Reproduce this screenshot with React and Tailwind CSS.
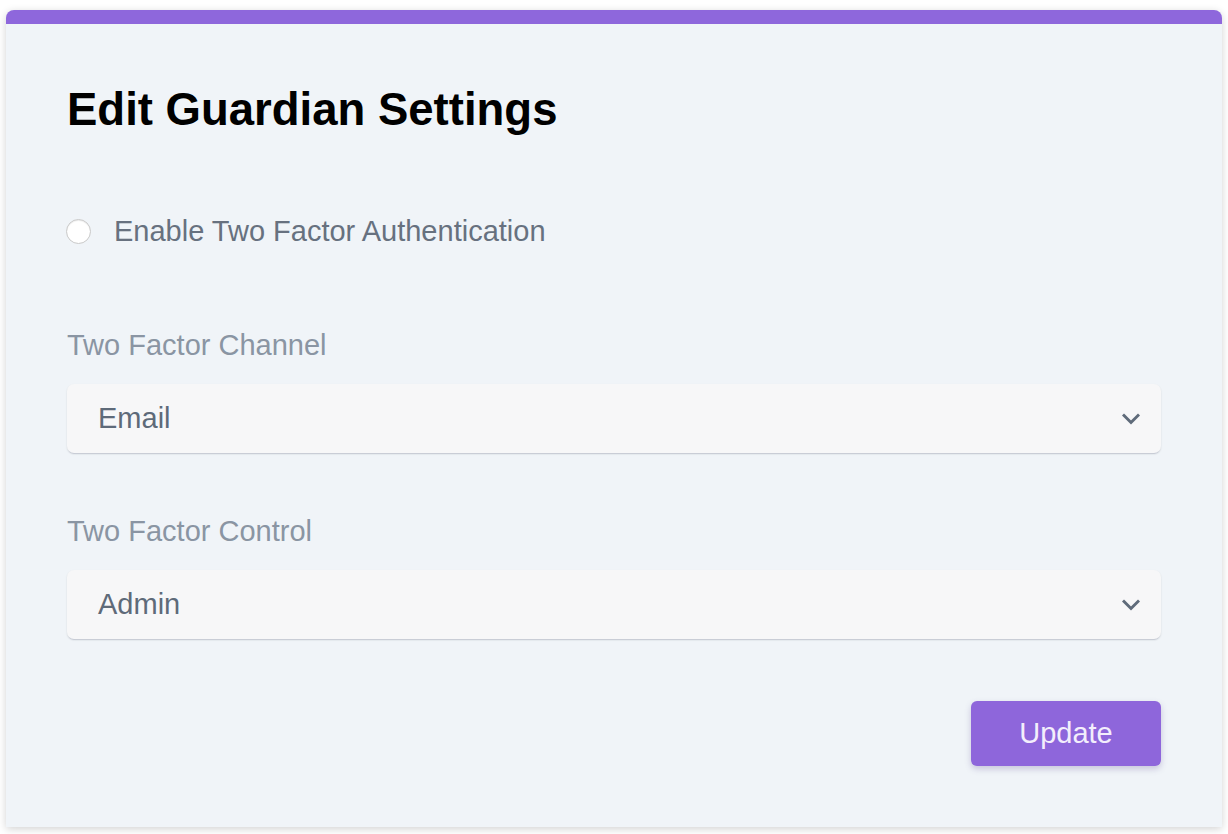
import React from "react";

function Chevron() {
  return (
    <svg width="18" height="12" viewBox="0 0 18 12" fill="none">
      <path d="M2 2.5 L9 9.5 L16 2.5" stroke="#5f6b7a" strokeWidth="3" strokeLinecap="square" />
    </svg>
  );
}

function Select({ value }) {
  return (
    <div className="flex h-[69px] items-center justify-between rounded-[7px] bg-[#f7f7f8] pl-[31px] pr-[21px] shadow-[0_1px_2px_rgba(0,0,0,0.12),0_2px_1px_-1px_rgba(150,160,190,0.25)]">
      <span className="text-[29px] text-[#5e6a79]">{value}</span>
      <Chevron />
    </div>
  );
}

export default function App() {
  return (
    <div className="min-h-[834px] w-[1228px] bg-white pt-[10px] pl-[6px] font-['Liberation_Sans',Arial,sans-serif]">
      <div className="h-[817px] w-[1216px] overflow-hidden rounded-t-[8px] bg-[#f0f4f8] shadow-[0_2px_8px_rgba(0,0,0,0.18)]">
        <div className="h-[14px] bg-[#8e67dc]" />
        <div className="px-[61px]">
          <h1 className="mt-[60px] text-[45.5px] font-bold leading-[52px] text-black">Edit Guardian Settings</h1>
          <div className="mt-[79px] flex items-center">
            <div className="-ml-[1px] h-[25px] w-[25px] rounded-full border border-[#c9c9c9] bg-white shadow-[inset_0_1px_1px_rgba(0,0,0,0.08)]" />
            <span className="ml-[23px] text-[29px] leading-[32px] text-[#67717f]">Enable Two Factor Authentication</span>
          </div>
          <div className="mt-[82px] text-[29px] leading-[32px] text-[#8a95a3]">Two Factor Channel</div>
          <div className="mt-[23px]">
            <Select value="Email" />
          </div>
          <div className="mt-[62px] text-[29px] leading-[32px] text-[#8a95a3]">Two Factor Control</div>
          <div className="mt-[23px]">
            <Select value="Admin" />
          </div>
          <div className="mt-[62px] flex justify-end">
            <button className="flex h-[65px] w-[190px] items-center justify-center rounded-[6px] bg-[#8e66db] text-[29px] text-[#f3eefc] shadow-[0_3px_6px_rgba(80,60,140,0.25)]">
              Update
            </button>
          </div>
        </div>
      </div>
    </div>
  );
}
